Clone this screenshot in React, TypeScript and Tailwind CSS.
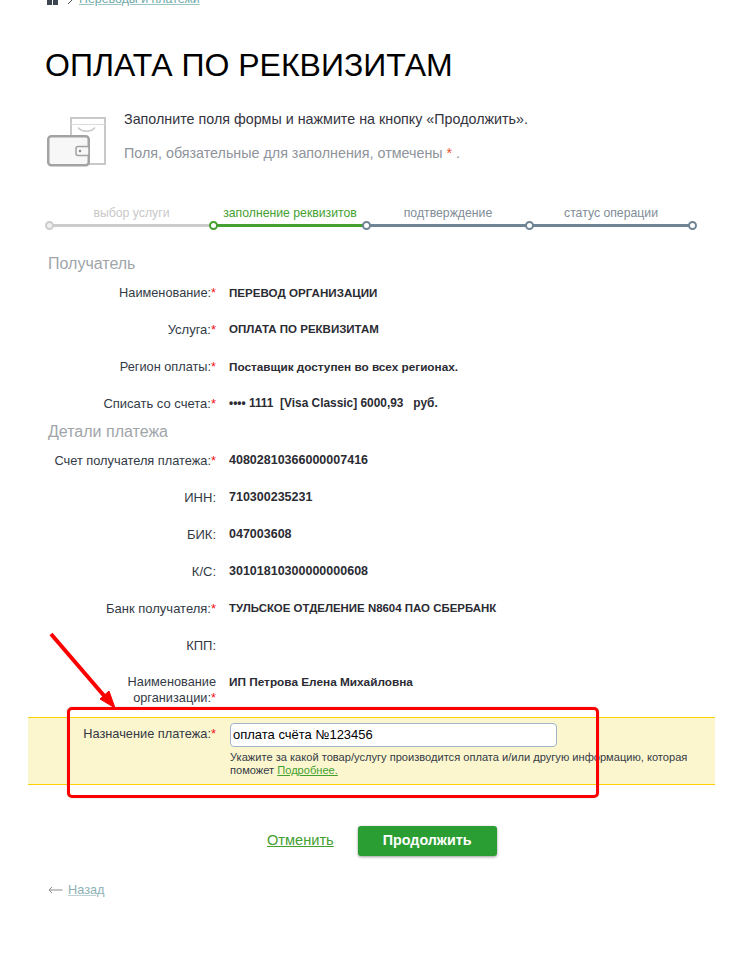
const sans = "font-['Liberation_Sans',Arial,sans-serif]";

function Row({ label, value, req = true, size = "text-[11.8px]", labelSize = "text-[12.75px]" }: { label: string; value?: React.ReactNode; req?: boolean; size?: string; labelSize?: string }) {
  return (
    <div className="flex h-[37px] items-center">
      <div className={`w-[171px] text-right leading-[15px] text-[#333a45] ${labelSize}`}>
        {label}
        {req && <span className="text-[#f01414]">*</span>}
      </div>
      <div className={`ml-[13px] font-bold text-[#2b2b33] ${size}`}>{value}</div>
    </div>
  );
}

function Node({ color, fill = "#ffffff" }: { color: string; fill?: string }) {
  return <span className="z-10 -mx-[1px] h-[9px] w-[9px] shrink-0 rounded-full border-2" style={{ borderColor: color, backgroundColor: fill }} />;
}

function Step({ label, w, color, text, fill }: { label: string; w: string; color: string; text: string; fill?: string }) {
  return (
    <div className={w}>
      <div className="h-[15px] pl-[7px] text-center text-[12.25px] leading-[14px]" style={{ color: text }}>{label}</div>
      <div className="flex items-center">
        <Node color={color} fill={fill} />
        <span className="h-[3px] flex-1" style={{ backgroundColor: color }} />
      </div>
    </div>
  );
}

function Wallet() {
  return (
    <svg width="60" height="52" viewBox="0 0 60 52" className="shrink-0">
      <rect x="24" y="1" width="34" height="46" fill="#fff" stroke="#c9c9c9" strokeWidth="2" />
      <path d="M24 7.5H58" stroke="#dcdcdc" strokeWidth="1" />
      <path d="M31 10.5c4 5 13 5 17 0" fill="none" stroke="#c9c9c9" strokeWidth="1.5" />
      <rect x="1.25" y="19.25" width="40.5" height="29" rx="3" fill="#f7f7f7" stroke="#a3a3a3" strokeWidth="2.5" />
      <rect x="29" y="29.5" width="13" height="9" rx="2" fill="#f7f7f7" stroke="#a3a3a3" strokeWidth="1.5" />
      <circle cx="33" cy="34" r="1.2" fill="#888" />
    </svg>
  );
}

export default function App() {
  return (
    <div className={`${sans} relative h-[960px] w-[737px] overflow-hidden bg-white`}>
      <div className="-mt-[10px] flex h-[18px] items-center pl-[47px]">
        <span className="flex gap-[1px]">
          <span className="h-[12px] w-[5px] bg-[#3d4550]" />
          <span className="h-[12px] w-[5px] bg-[#3d4550]" />
        </span>
        <svg width="8" height="12" viewBox="0 0 8 12" className="ml-[8px]">
          <path d="M2 1l5 5-5 5" fill="none" stroke="#555" strokeWidth="1" />
        </svg>
        <a className="ml-[5px] text-[12.4px] text-[#6fa8a8] underline decoration-[#9cc4c4]">Переводы и платежи</a>
      </div>

      <h1 className="mt-[35px] pl-[45px] text-[32px] leading-[44px] font-normal text-black">ОПЛАТА ПО РЕКВИЗИТАМ</h1>

      <div className="mt-[20px] flex pl-[47px]">
        <div className="mt-[10px]"><Wallet /></div>
        <div className="mt-[2px] ml-[17px]">
          <p className="text-[14.3px] leading-[20px] text-[#33333d]">Заполните поля формы и нажмите на кнопку «Продолжить».</p>
          <p className="mt-[14px] text-[14.3px] leading-[20px] text-[#8f949b]">
            Поля, обязательные для заполнения, отмечены <span className="text-[#f0552d]">*</span> .
          </p>
        </div>
      </div>

      <div className="mt-[37px] ml-[46px] flex w-[650px]">
        <Step label="выбор услуги" w="w-[164px]" color="#cccccc" text="#c8c8c8" fill="#f0f0f0" />
        <Step label="заполнение реквизитов" w="w-[153px]" color="#44a02f" text="#44a02f" />
        <Step label="подтверждение" w="w-[163px]" color="#6f8595" text="#808c96" />
        <Step label="статус операции" w="w-[163px]" color="#6f8595" text="#808c96" />
        <div className="flex items-end"><Node color="#6f8595" /></div>
      </div>

      <section className="mt-[22px] pl-[45px]">
        <h2 className="pl-[3px] text-[16px] leading-[24px] font-normal text-[#a0a5aa]">Получатель</h2>
        <div className="-mt-[2px]">
          <Row label="Наименование:" size="text-[11.6px]" value="ПЕРЕВОД ОРГАНИЗАЦИИ" />
          <Row label="Услуга:" labelSize="text-[13px]" size="text-[11.5px]" value="ОПЛАТА ПО РЕКВИЗИТАМ" />
          <Row label="Регион оплаты:" size="text-[11.75px]" value="Поставщик доступен во всех регионах." />
          <Row label="Списать со счета:" labelSize="text-[13px]" size="text-[11.9px]" value={<span className="whitespace-pre">•••• 1111  [Visa Classic] 6000,93   руб.</span>} />
        </div>
        <h2 className="-mt-[2px] pl-[3px] text-[16px] leading-[24px] font-normal text-[#a0a5aa]">Детали платежа</h2>
        <div className="-mt-[2px]">
          <Row label="Счет получателя платежа:" labelSize="text-[12.8px]" size="text-[12.5px]" value="40802810366000007416" />
          <Row label="ИНН:" req={false} labelSize="text-[13px]" size="text-[12.5px]" value="710300235231" />
          <Row label="БИК:" req={false} labelSize="text-[13px]" size="text-[12.5px]" value="047003608" />
          <Row label="К/С:" req={false} labelSize="text-[13px]" size="text-[12.5px]" value="30101810300000000608" />
          <Row label="Банк получателя:" labelSize="text-[13px]" size="text-[11.45px]" value="ТУЛЬСКОЕ ОТДЕЛЕНИЕ N8604 ПАО СБЕРБАНК" />
          <Row label="КПП:" req={false} labelSize="text-[13px]" />
          <div className="flex h-[53px] pt-[10px]">
            <div className="w-[171px] pl-[60px] text-right text-[12.75px] leading-[16px] text-[#333a45]">
              Наименование организации:<span className="text-[#f01414]">*</span>
            </div>
            <div className="ml-[13px] text-[11.8px] leading-[16px] font-bold text-[#2b2b33]">ИП Петрова Елена Михайловна</div>
          </div>
        </div>
      </section>

      <section className="ml-[28px] flex h-[68px] w-[687px] border-y border-[#fdd000] bg-[#fcf6cf] pt-[4px] pl-[17px]">
        <div className="w-[171px] pt-[4px] text-right text-[12.8px] leading-[16px] text-[#333a45]">
          Назначение платежа:<span className="text-[#f01414]">*</span>
        </div>
        <div className="ml-[14px]">
          <input
            readOnly
            value="оплата счёта №123456"
            className={`${sans} h-[24px] w-[327px] rounded-[4px] border border-[#a3b4c6] bg-white px-[2px] text-[13px] text-black outline-none`}
          />
          <p className="mt-[4px] w-[470px] text-[11.1px] leading-[13px] text-[#333a45]">
            Укажите за какой товар/услугу производится оплата и/или другую информацию, которая поможет{" "}
            <a className="text-[#44a02f] underline">Подробнее.</a>
          </p>
        </div>
      </section>

      <div className="mt-[41px] flex items-center pl-[267px]">
        <a className="text-[14.6px] text-[#44a02f] underline">Отменить</a>
        <button className={`${sans} ml-[24px] h-[30px] w-[139px] rounded-[3px] bg-[#2b9e33] text-[14.3px] font-bold text-white shadow-[0_1px_3px_rgba(0,0,0,0.4)]`}>Продолжить</button>
      </div>

      <div className="mt-[26px] flex items-center pl-[48px] text-[12.75px] leading-[16px]">
        <svg width="15" height="8" viewBox="0 0 15 8">
          <path d="M14.5 4H1M4 1L1 4l3 3" fill="none" stroke="#8a8a8a" strokeWidth="1" />
        </svg>
        <a className="ml-[5px] text-[#8db0b5] underline decoration-[#bcd2d5]">Назад</a>
      </div>

      <div className="pointer-events-none absolute top-[707px] left-[67px] h-[91px] w-[532px] rounded-[5px] border-[3px] border-[#fc0000] shadow-[0_0_1px_rgba(0,0,0,0.5)]" />
      <svg className="pointer-events-none absolute top-[632px] left-[48px]" width="72" height="78" viewBox="0 0 72 78">
        <path d="M3 2L58 66" stroke="#fc0000" strokeWidth="4" />
        <path d="M67 76L52 67L61 59Z" fill="#fc0000" stroke="#fc0000" strokeWidth="1" />
      </svg>
    </div>
  );
}
